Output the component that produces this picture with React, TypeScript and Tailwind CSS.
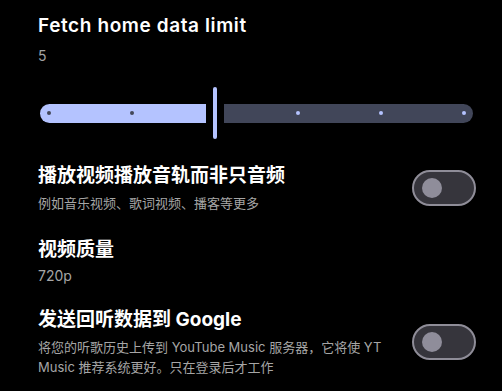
import React from "react";

const FONT = '"Inter", "Noto Sans CJK SC", sans-serif';

function Toggle() {
  return (
    <div className="flex h-[36px] w-[64px] shrink-0 items-center rounded-full border-2 border-[#8f8d98] bg-[#36353c] pl-[8px]">
      <div className="h-[20px] w-[20px] rounded-full bg-[#8f8d9a]" />
    </div>
  );
}

function Slider() {
  const dotsLeft = [49, 132];
  const dotsRight = [298, 381, 464];
  return (
    <div className="mt-[21px] flex h-[52px] items-center pl-[2px]">
      <div className="relative h-[19px] w-[166px] rounded-l-full rounded-r-[3px] bg-[#b4c3ff]">
        {dotsLeft.map((x) => (
          <div
            key={x}
            className="absolute top-[7.5px] h-[4px] w-[4px] rounded-full bg-[#434759]"
            style={{ left: x - 40 - 2 }}
          />
        ))}
      </div>
      <div className="ml-[7px] h-[52px] w-[4px] rounded-full bg-[#b4c3ff]" />
      <div className="relative ml-[7px] h-[19px] w-[249px] rounded-r-full rounded-l-[3px] bg-[#414659]">
        {dotsRight.map((x) => (
          <div
            key={x}
            className="absolute top-[7.5px] h-[4px] w-[4px] rounded-full bg-[#b4c3ff]"
            style={{ left: x - 224 - 2 }}
          />
        ))}
      </div>
    </div>
  );
}

export default function App() {
  return (
    <div
      className="h-[391px] w-[502px] overflow-hidden bg-black pl-[38px] pr-[26px] pt-[13px] text-white"
      style={{ fontFamily: FONT }}
    >
      <div className="text-[19px] font-semibold leading-[26px] tracking-[0.6px]">Fetch home data limit</div>
      <div className="mt-[7px] text-[14px] leading-[20px] text-[#a3a3a3]">5</div>
      <Slider />

      <div className="mt-[24px] flex items-center justify-between">
        <div>
          <div className="text-[19px] font-bold leading-[26px]">播放视频播放音轨而非只音频</div>
          <div className="mt-[4px] text-[13px] leading-[20px] text-[#a6a6a6]">例如音乐视频、歌词视频、播客等更多</div>
        </div>
        <Toggle />
      </div>

      <div className="mt-[24px]">
        <div className="text-[19px] font-bold leading-[26px]">视频质量</div>
        <div className="mt-[3px] text-[14px] leading-[20px] text-[#a6a6a6]">720p</div>
      </div>

      <div className="mt-[21px] flex items-center justify-between gap-[20px]">
        <div className="w-[350px]">
          <div className="text-[19px] font-bold leading-[26px]">发送回听数据到 Google</div>
          <div className="mt-[4px] text-[13px] leading-[20px] text-[#a6a6a6]">
            将您的听歌历史上传到 YouTube Music 服务器，它将使 YT Music 推荐系统更好。只在登录后才工作
          </div>
        </div>
        <Toggle />
      </div>
    </div>
  );
}
